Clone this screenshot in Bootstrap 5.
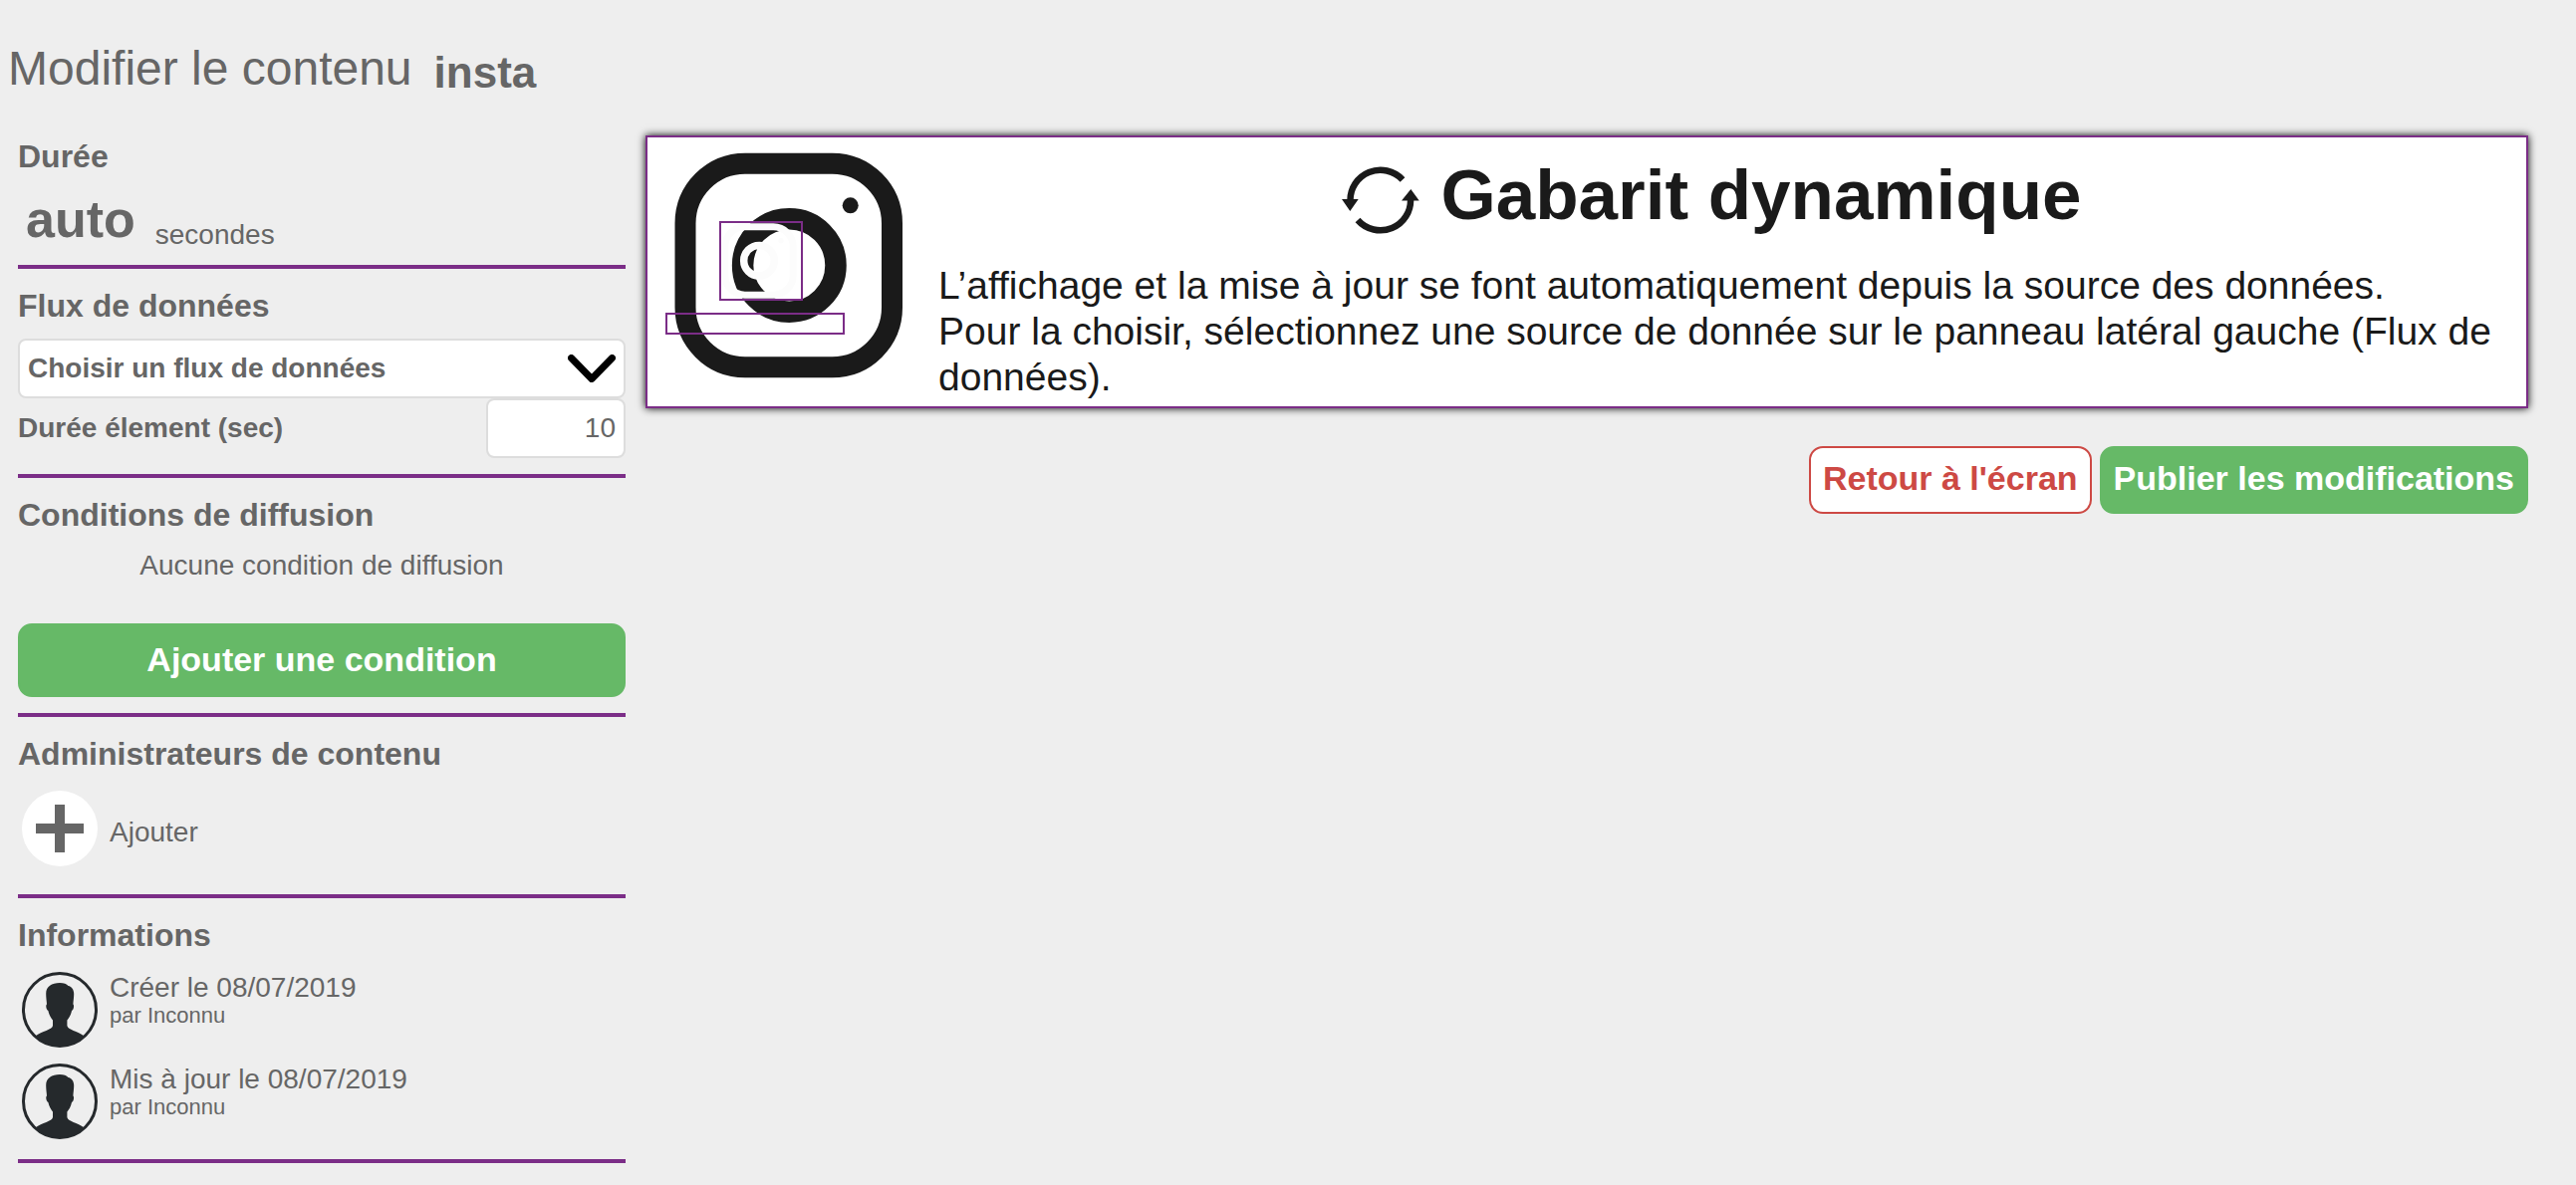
<!DOCTYPE html>
<html lang="fr">
<head>
<meta charset="utf-8">
<meta name="viewport" content="width=device-width, initial-scale=1">
<title>Modifier le contenu</title>
<link href="https://cdn.jsdelivr.net/npm/bootstrap@5.3.0/dist/css/bootstrap.min.css" rel="stylesheet">
<style>
  :root { --violet: #7b2d87; --vert: #66b967; --rouge: #cd4944; }
  body { background: #eee; color: #666; font-family: "Liberation Sans", Arial, sans-serif; font-size: 28px; line-height: 36px; }
  .page-head { padding: 41px 8px 23px; gap: 22px; }
  .page-title { font-size: 48px; line-height: 56px; font-weight: 400; }
  .content-name { font-size: 44px; line-height: 48px; font-weight: 700; }
  .side-panel { width: 628px; padding-left: 18px; }
  .side-section { border-bottom: 4px solid var(--violet); padding: 16px 0; }
  .side-section h2 { font-size: 32px; line-height: 42px; font-weight: 700; margin: 0 0 12px; }
  .duration-row { gap: 20px; padding-left: 8px; }
  .duration { font-size: 52px; line-height: 60px; font-weight: 700; }
  .unit { line-height: 28px; }
  .field { height: 60px; border: 2px solid #ddd; border-radius: 8px; color: #666; background-color: #fff; font-size: 28px; line-height: 36px; padding: 0 8px; }
  .flux { font-weight: 700; background-image: url("data:image/svg+xml,%3Csvg xmlns='http://www.w3.org/2000/svg' viewBox='0 0 48 28'%3E%3Cpath d='M3.500 3.500L24 24.500L44.500 3.500' fill='none' stroke='%23000' stroke-width='7' stroke-linecap='round' stroke-linejoin='round'/%3E%3C/svg%3E"); background-size: 48px 28px; background-position: right 8px center; }
  .item-time { width: 140px; text-align: right; }
  .no-condition { margin-bottom: 40px; }
  .btn-app { font-size: 34px; line-height: 40px; font-weight: 700; border-radius: 14px; border: 2px solid var(--vert); background: var(--vert); color: #fff; padding: 10px 12px 14px; }
  .btn-app:hover { background: #57a858; color: #fff; }
  .btn-back { background: #fff; color: var(--rouge); border-color: var(--rouge); }
  .btn-back:hover { background: var(--rouge); color: #fff; }
  .btn-wide { padding: 14px 12px 16px; }
  .person { padding: 4px; gap: 12px; }
  .person + .person { margin-top: 8px; }
  .person-add { margin-bottom: 8px; }
  .person-add a { padding-top: 8px; }
  .avatar { width: 76px; height: 76px; flex: none; }
  .when { line-height: 32px; }
  .by { font-size: 22px; line-height: 24px; }
  .main-zone { padding: 16px 48px 0 20px; min-width: 0; }
  .preview { background: #fff; border: 2px solid var(--violet); box-shadow: 0 0 8px #000; color: #1a1a1a; padding: 15px 28px 6px 18px; gap: 34px; }
  .preview-icon { width: 240px; height: 230px; flex: none; }
  .preview-text { padding-top: 3px; }
  .preview-title { gap: 20px; padding-right: 14px; margin-bottom: 28px; }
  .preview-title svg { width: 80px; height: 80px; flex: none; }
  .preview-title h3 { font-size: 71px; line-height: 80px; font-weight: 700; margin: 0; }
  .preview p { font-size: 39px; line-height: 46px; margin: 0; }
  .actions { margin-top: 38px; }
</style>
</head>
<body>
<svg class="d-none" xmlns="http://www.w3.org/2000/svg">
  <symbol id="person" viewBox="0 0 76 76">
    <circle cx="38" cy="38" r="36.500" fill="none" stroke="#25292c" stroke-width="3"/>
    <path fill="#25292c" d="M38 11C42 11 45 12 46.500 14C50 14.500 52.200 18 52.200 22C52.200 26 51.600 29 51.400 32.500C52.600 33 52.200 38 50 39C49.200 43.500 47 46.500 45.400 48.500V54C46 58 56 59.500 62.500 64.500A37 37 0 0 1 13.500 64.500C20 59.500 30.400 58 31 54V48.500C29 46 27.200 43 26.400 39C24 38 23.800 33 25 32.500C24.800 29 24.200 26 24.200 22C24.200 14.500 30 11 38 11Z"/>
  </symbol>
</svg>
<header class="page-head d-flex align-items-end">
  <h1 class="page-title m-0">Modifier le contenu</h1>
  <span class="content-name">insta</span>
</header>
<div class="d-flex align-items-start">
  <aside class="side-panel flex-shrink-0">
    <section class="side-section">
      <h2>Durée</h2>
      <div class="duration-row d-flex align-items-end">
        <span class="duration">auto</span>
        <span class="unit">secondes</span>
      </div>
    </section>
    <section class="side-section">
      <h2><label for="flux">Flux de données</label></h2>
      <select id="flux" class="form-select field flux"><option>Choisir un flux de données</option></select>
      <div class="d-flex align-items-center justify-content-between">
        <label for="item-time" class="fw-bold">Durée élement (sec)</label>
        <input id="item-time" class="form-control field item-time" type="text" inputmode="numeric" value="10">
      </div>
    </section>
    <section class="side-section">
      <h2>Conditions de diffusion</h2>
      <p class="no-condition text-center">Aucune condition de diffusion</p>
      <button type="button" class="btn btn-app btn-wide w-100">Ajouter une condition</button>
    </section>
    <section class="side-section">
      <h2>Administrateurs de contenu</h2>
      <div class="person person-add d-flex align-items-center">
        <svg class="avatar" viewBox="0 0 76 76" aria-hidden="true"><circle cx="38" cy="38" r="38" fill="#fff"/><path d="M14 38H62M38 14V62" stroke="#666" stroke-width="10"/></svg>
        <a href="#" class="text-reset text-decoration-none">Ajouter</a>
      </div>
    </section>
    <section class="side-section">
      <h2>Informations</h2>
      <div class="person d-flex align-items-start">
        <svg class="avatar" aria-hidden="true"><use href="#person"/></svg>
        <div><div class="when">Créer le 08/07/2019</div><div class="by">par Inconnu</div></div>
      </div>
      <div class="person d-flex align-items-start">
        <svg class="avatar" aria-hidden="true"><use href="#person"/></svg>
        <div><div class="when">Mis à jour le 08/07/2019</div><div class="by">par Inconnu</div></div>
      </div>
    </section>
  </aside>
  <main class="main-zone flex-grow-1">
    <div class="preview d-flex align-items-start">
      <svg class="preview-icon" viewBox="0 0 240 230" fill="none" aria-hidden="true">
        <!-- camera -->
        <rect x="20" y="11.200" width="207.500" height="204.600" rx="60" stroke="#1a1a1a" stroke-width="21"/>
        <circle cx="124.300" cy="113.500" r="46.700" stroke="#1a1a1a" stroke-width="21.500"/>
        <circle cx="185.700" cy="53.300" r="8" fill="#1a1a1a"/>
        <!-- small white camera -->
        <rect x="59.800" y="74.800" width="68.400" height="68.400" rx="20" stroke="#fcfcfc" stroke-width="7"/>
        <circle cx="94" cy="108.700" r="15.300" stroke="#fcfcfc" stroke-width="7.500"/>
        <circle cx="116" cy="88.700" r="2.600" fill="#fcfcfc"/>
        <!-- editable zones -->
        <g stroke="#7b2d87" stroke-width="2" shape-rendering="crispEdges">
          <rect x="55" y="70" width="82" height="78"/>
          <rect x="1" y="162" width="178" height="20"/>
        </g>
      </svg>
      <div class="preview-text flex-grow-1">
        <div class="preview-title d-flex justify-content-center">
          <svg viewBox="8 0 80 80" aria-hidden="true">
            <path d="M17.500 46A30.300 30.300 0 0 1 70 24.500M78 43A30.300 30.300 0 0 1 25 65" fill="none" stroke="#1a1a1a" stroke-width="6.500"/>
            <path d="M9 44H25.700L17.300 56ZM69 45.500H86.700L78.300 34Z" fill="#1a1a1a"/>
          </svg>
          <h3>Gabarit dynamique</h3>
        </div>
        <p>L’affichage et la mise à jour se font automatiquement depuis la source des données.<br>Pour la choisir, sélectionnez une source de donnée sur le panneau latéral gauche (Flux de données).</p>
      </div>
    </div>
    <div class="actions d-flex justify-content-end gap-2">
      <button type="button" class="btn btn-app btn-back">Retour à l'écran</button>
      <button type="button" class="btn btn-app">Publier les modifications</button>
    </div>
  </main>
</div>
<script src="https://cdn.jsdelivr.net/npm/bootstrap@5.3.0/dist/js/bootstrap.bundle.min.js"></script>
</body>
</html>
